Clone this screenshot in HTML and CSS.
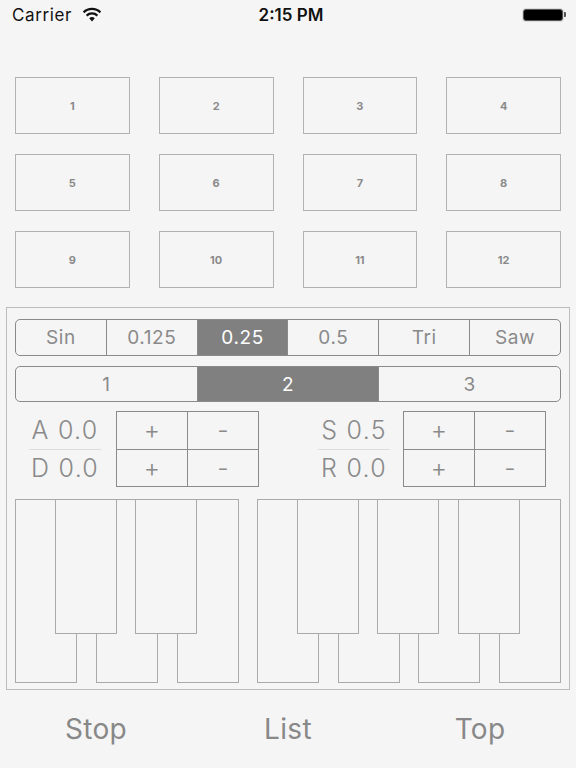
FILE: index.html
```html
<!DOCTYPE html>
<html lang="en">
<head>
    <meta charset="UTF-8">
    <meta name="viewport" content="width=device-width, initial-scale=1.0">
    <title>Synth</title>
    <link rel="stylesheet" href="styles.css">
</head>
<body>
    <!-- status bar -->
    <div class="status-bar">
        <div class="carrier">
            Carrier
            <svg class="wifi" width="20" height="15" viewBox="0 0 20 15">
                <path d="M10 14.5 L7.2 11.3 A4.2 4.2 0 0 1 12.8 11.3 Z" fill="#111"/>
                <path d="M4.6 8.6 A7.8 7.8 0 0 1 15.4 8.6" fill="none" stroke="#111" stroke-width="2.2"/>
                <path d="M1.6 5.4 A12 12 0 0 1 18.4 5.4" fill="none" stroke="#111" stroke-width="2.2"/>
            </svg>
        </div>
        <div class="clock">2:15 PM</div>
        <div class="battery"><span class="battery-body"></span><span class="battery-nub"></span></div>
    </div>

    <!-- pads -->
    <div class="pads">
        <div class="pad">1</div>
        <div class="pad">2</div>
        <div class="pad">3</div>
        <div class="pad">4</div>
        <div class="pad">5</div>
        <div class="pad">6</div>
        <div class="pad">7</div>
        <div class="pad">8</div>
        <div class="pad">9</div>
        <div class="pad">10</div>
        <div class="pad">11</div>
        <div class="pad">12</div>
    </div>

    <!-- synth panel -->
    <section class="panel">
        <div class="segmented wave">
            <div class="seg">Sin</div>
            <div class="seg">0.125</div>
            <div class="seg selected">0.25</div>
            <div class="seg">0.5</div>
            <div class="seg">Tri</div>
            <div class="seg">Saw</div>
        </div>
        <div class="segmented octave">
            <div class="seg">1</div>
            <div class="seg selected">2</div>
            <div class="seg">3</div>
        </div>

        <div class="adsr">
            <div class="env-group left">
                <div class="env-labels">
                    <div class="env-label">A 0.0</div>
                    <div class="env-label">D 0.0</div>
                </div>
                <div class="stepper">
                    <div class="step">+</div>
                    <div class="step">-</div>
                    <div class="step">+</div>
                    <div class="step">-</div>
                </div>
            </div>
            <div class="env-group right">
                <div class="env-labels">
                    <div class="env-label">S 0.5</div>
                    <div class="env-label">R 0.0</div>
                </div>
                <div class="stepper">
                    <div class="step">+</div>
                    <div class="step">-</div>
                    <div class="step">+</div>
                    <div class="step">-</div>
                </div>
            </div>
        </div>

        <div class="keyboard">
            <div class="keys keys-cde">
                <div class="white"></div>
                <div class="white"></div>
                <div class="white"></div>
                <div class="black b1"></div>
                <div class="black b2"></div>
            </div>
            <div class="keys keys-fgab">
                <div class="white"></div>
                <div class="white"></div>
                <div class="white"></div>
                <div class="white"></div>
                <div class="black b1"></div>
                <div class="black b2"></div>
                <div class="black b3"></div>
            </div>
        </div>
    </section>

    <!-- bottom bar -->
    <div class="toolbar">
        <div class="tool">Stop</div>
        <div class="tool">List</div>
        <div class="tool">Top</div>
    </div>
</body>
</html>
```

FILE: styles.css
```css
body {
    font-family: Inter, "Liberation Sans", sans-serif;
    margin: 0;
    padding: 0;
    background-color: #f5f5f5;
    width: 576px;
    height: 768px;
    overflow: hidden;
}

/* status bar */
.status-bar {
    height: 29px;
    display: flex;
    align-items: center;
    justify-content: space-between;
    padding: 0 10px 0 12px;
    position: relative;
}

.carrier {
    display: flex;
    align-items: center;
    gap: 10px;
    font-size: 17px;
    letter-spacing: 0.6px;
    color: #111;
}

.clock {
    position: absolute;
    left: 0;
    right: 0;
    text-align: center;
    font-size: 17px;
    font-weight: 600;
    color: #111;
    padding-left: 6px;
    pointer-events: none;
}

.battery {
    display: flex;
    align-items: center;
}

.battery-body {
    width: 38px;
    height: 10px;
    background-color: #000;
    border-radius: 3px;
    border: 1px solid #555;
    box-shadow: 0 0 0 1px #ddd;
}

.battery-nub {
    width: 2px;
    height: 5px;
    background-color: #555;
    border-radius: 0 1px 1px 0;
    margin-left: 1px;
}

/* pads */
.pads {
    margin: 48px 15px 0 15px;
    display: grid;
    grid-template-columns: repeat(4, 1fr);
    grid-auto-rows: 57px;
    column-gap: 29px;
    row-gap: 20px;
}

.pad {
    border: 1px solid #b2b2b2;
    display: flex;
    align-items: center;
    justify-content: center;
    font-size: 11px;
    font-weight: 700;
    color: #8a8a8a;
}

/* panel */
.panel {
    margin: 19px 0 0 6px;
    width: 546px;
    border: 1px solid #bcbcbc;
    padding: 11px 8px 6px 8px;
}

.segmented {
    display: flex;
    border: 1px solid #8a8a8a;
    border-radius: 5px;
    overflow: hidden;
}

.segmented.wave {
    height: 35px;
}

.segmented.octave {
    height: 34px;
    margin-top: 10px;
}

.seg {
    flex: 1;
    display: flex;
    align-items: center;
    justify-content: center;
    font-size: 19px;
    font-weight: 400;
    letter-spacing: 0.6px;
    color: #8a8a8a;
    border-left: 1px solid #8a8a8a;
}

.seg:first-child {
    border-left: none;
}

.seg.selected {
    background-color: #808080;
    color: #fff;
}

/* envelope */
.adsr {
    display: flex;
    margin-top: 9px;
    height: 76px;
}

.env-group {
    display: flex;
}

.env-group.left {
    margin-left: 14px;
}

.env-group.right {
    margin-left: 59px;
}

.env-labels {
    width: 72px;
    display: flex;
    flex-direction: column;
}

.env-label {
    flex: 1;
    display: flex;
    align-items: center;
    justify-content: center;
    font-size: 25px;
    font-weight: 300;
    letter-spacing: 1.3px;
    color: #8a8a8a;
    white-space: nowrap;
}

.env-label:first-child {
    border-bottom: 1px solid #dcdcdc;
}

.stepper {
    margin-left: 15px;
    width: 142px;
    display: grid;
    grid-template-columns: 1fr 1fr;
    grid-template-rows: 1fr 1fr;
    border-top: 1px solid #8a8a8a;
    border-left: 1px solid #8a8a8a;
}

.env-group.right .stepper {
    margin-left: 13px;
}

.step {
    border-right: 1px solid #8a8a8a;
    border-bottom: 1px solid #8a8a8a;
    display: flex;
    align-items: center;
    justify-content: center;
    font-size: 25px;
    font-weight: 300;
    color: #8a8a8a;
}

/* keyboard */
.keyboard {
    display: flex;
    gap: 18px;
    margin-top: 12px;
    height: 184px;
}

.keys {
    position: relative;
    display: flex;
    justify-content: space-between;
}

.keys-cde {
    width: 224px;
}

.keys-fgab {
    width: 304px;
}

.white {
    width: 62px;
    height: 184px;
    box-sizing: border-box;
    border: 1px solid #aaaaaa;
}

.black {
    position: absolute;
    top: 0;
    width: 62px;
    height: 135px;
    box-sizing: border-box;
    border: 1px solid #aaaaaa;
    background-color: #f5f5f5;
}

.keys-cde .b1 { left: 40px; }
.keys-cde .b2 { left: 120px; }
.keys-fgab .b1 { left: 40px; }
.keys-fgab .b2 { left: 120px; }
.keys-fgab .b3 { left: 201px; }

/* bottom bar */
.toolbar {
    display: flex;
    height: 77px;
    align-items: center;
    padding-bottom: 2px;
}

.tool {
    flex: 1;
    text-align: center;
    font-size: 28px;
    font-weight: 400;
    letter-spacing: 0.3px;
    color: #888;
}
```
